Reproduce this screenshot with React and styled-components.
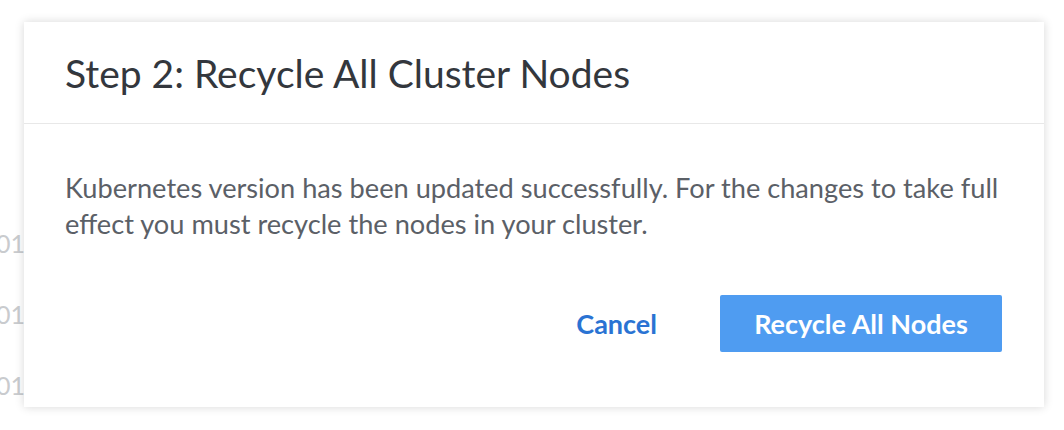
import React from "react";
import styled, { createGlobalStyle } from "styled-components";

const GlobalStyle = createGlobalStyle`
  html, body {
    margin: 0;
    padding: 0;
    background: #fff;
    font-family: Lato, "Open Sans", sans-serif;
  }
`;

const Page = styled.div`
  position: relative;
  width: 1064px;
  height: 430px;
  overflow: hidden;
  background: #fff;
`;

const DateColumn = styled.ul`
  list-style: none;
  margin: 0 0 0 -4px;
  padding: 230px 0 0 0;
  display: flex;
  flex-direction: column;
  align-items: flex-start;
  gap: 44px;

  li {
    white-space: nowrap;
    font-size: 25px;
    line-height: 27px;
    color: #c9cbce;
  }
`;

const Modal = styled.div`
  position: absolute;
  top: 22px;
  left: 24px;
  width: 1020px;
  height: 385px;
  background: #fff;
  box-shadow: 0 0 9px rgba(0, 0, 0, 0.16);
  display: flex;
  flex-direction: column;
`;

const Header = styled.div`
  height: 102px;
  box-sizing: border-box;
  border-bottom: 1px solid #e8e8e8;
  display: flex;
  align-items: center;
  padding: 0 41px;

  h2 {
    margin: 0;
    font-weight: 400;
    font-size: 39px;
    color: #33373d;
  }
`;

const Body = styled.div`
  padding: 46px 30px 0 41px;

  p {
    margin: 0;
    font-size: 27.2px;
    line-height: 36px;
    color: #5b6067;
  }
`;

const Footer = styled.div`
  display: flex;
  justify-content: flex-end;
  align-items: center;
  gap: 63px;
  padding: 53px 42px 0 0;
`;

const LinkButton = styled.button`
  border: 0;
  background: none;
  padding: 0;
  font-family: inherit;
  font-size: 27px;
  font-weight: 700;
  color: #2a73d3;
  cursor: pointer;
`;

const PrimaryButton = styled.button`
  border: 0;
  border-radius: 2px;
  width: 282px;
  height: 57px;
  background: #4f9cf1;
  color: #fff;
  font-family: inherit;
  font-size: 27px;
  font-weight: 700;
  cursor: pointer;
`;

export default function App() {
  return (
    <Page>
      <GlobalStyle />
      <DateColumn>
        <li>01</li>
        <li>01</li>
        <li>01</li>
      </DateColumn>
      <Modal>
        <Header>
          <h2>Step 2: Recycle All Cluster Nodes</h2>
        </Header>
        <Body>
          <p>
            Kubernetes version has been updated successfully. For the changes to take full
            effect you must recycle the nodes in your cluster.
          </p>
        </Body>
        <Footer>
          <LinkButton>Cancel</LinkButton>
          <PrimaryButton>Recycle All Nodes</PrimaryButton>
        </Footer>
      </Modal>
    </Page>
  );
}
